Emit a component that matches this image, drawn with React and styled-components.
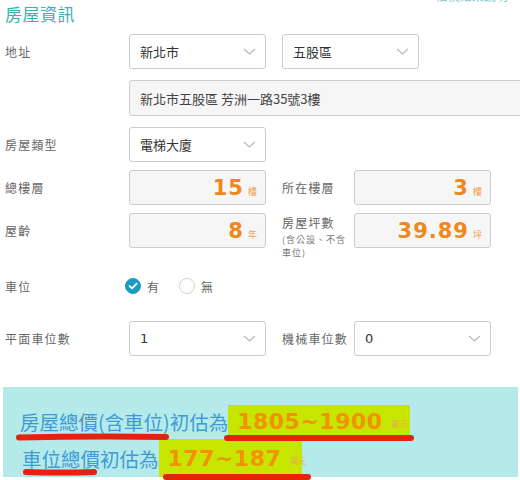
import React from "react";
import styled, { createGlobalStyle } from "styled-components";

const Global = createGlobalStyle`
  html, body { margin: 0; padding: 0; background: #fff; }
  body {
    width: 520px;
    height: 480px;
    overflow: hidden;
    font-family: "Noto Sans CJK TC", "Noto Sans", sans-serif;
  }
`;

const Page = styled.div`
  padding-left: 5px;
  width: 515px;
`;

const Header = styled.div`
  height: 30px;
  display: flex;
  justify-content: space-between;
  align-items: flex-start;
  overflow: hidden;
`;

const Title = styled.h2`
  margin: 0;
  font-size: 17px;
  font-weight: 400;
  line-height: 28px;
  color: #3fb0b2;
  letter-spacing: 0.5px;
`;

const TopLink = styled.a`
  margin-top: -11px;
  margin-right: 6px;
  font-size: 12px;
  line-height: 14px;
  color: #3fb0b2;
  opacity: 0.7;
  text-decoration: none;
`;

const Row = styled.div`
  display: flex;
  align-items: center;
  height: ${(p) => p.$h || 35}px;
  margin-top: ${(p) => p.$mt || 0}px;
`;

const Label = styled.div`
  width: ${(p) => p.$w || 124}px;
  flex: none;
  font-size: 12px;
  color: #666;
  letter-spacing: 1.2px;
`;

const SideLabel = styled.div`
  width: 72px;
  margin-left: 16px;
  flex: none;
  align-self: ${(p) => (p.$top ? "flex-start" : "center")};
  padding-top: ${(p) => (p.$top ? 1 : 0)}px;
  font-size: 12px;
  line-height: 17px;
  color: #666;
  letter-spacing: 1.2px;
`;

const Note = styled.div`
  margin-top: 2px;
  font-size: 9px;
  line-height: 13px;
  letter-spacing: 1px;
  color: #777;
`;

const SelectBox = styled.div`
  width: 137px;
  height: 35px;
  box-sizing: border-box;
  flex: none;
  margin-left: ${(p) => p.$ml || 0}px;
  border: 1px solid #ccc;
  border-radius: 3px;
  background: #fff;
  display: flex;
  align-items: center;
  justify-content: space-between;
  padding: 0 9px 0 10px;
  font-size: 13px;
  color: #333;
  font-family: ${(p) =>
    p.$num ? '"DejaVu Sans", sans-serif' : '"Noto Sans CJK TC", sans-serif'};
`;

const AddressBox = styled.div`
  width: 400px;
  height: 36px;
  box-sizing: border-box;
  flex: none;
  border: 1px solid #ccc;
  border-radius: 3px;
  background: #f6f6f6;
  display: flex;
  align-items: center;
  padding-left: 10px;
  font-size: 13px;
  color: #444;
`;

const NumberBox = styled.div`
  width: 137px;
  height: 35px;
  box-sizing: border-box;
  flex: none;
  border: 1px solid #ccc;
  border-radius: 3px;
  background: #f6f6f6;
  text-align: right;
  padding: 1px 8px 0 0;
  line-height: 32px;
  white-space: nowrap;
`;

const Num = styled.span`
  font-family: "DejaVu Sans", "Verdana", sans-serif;
  font-weight: 700;
  font-size: 21px;
  letter-spacing: 1px;
  color: #f0871b;
`;

const Unit = styled.span`
  font-size: 9px;
  color: #f0a050;
  margin-left: 4px;
`;

const RadioGroup = styled.div`
  display: flex;
  align-items: center;
  margin-left: -4px;
`;

const RadioItem = styled.label`
  display: flex;
  align-items: center;
  gap: 6px;
  margin-right: 20px;
  font-size: 12px;
  color: #666;
`;

const RadioDot = styled.span`
  width: 16px;
  height: 16px;
  box-sizing: border-box;
  border-radius: 50%;
  display: flex;
  align-items: center;
  justify-content: center;
  background: ${(p) => (p.$on ? "#1b9bc3" : "#fff")};
  border: 1px solid ${(p) => (p.$on ? "#1b9bc3" : "#d0d0d0")};
`;

const Panel = styled.div`
  position: relative;
  margin: 31px 0 0 -2px;
  width: 515px;
  height: 90px;
  box-sizing: border-box;
  padding: 18px 0 0 17px;
  background: #b5eaea;
`;

const Line = styled.div`
  display: flex;
  align-items: center;
  height: ${(p) => p.$h}px;
  margin-top: ${(p) => p.$mt || 0}px;
  padding-left: ${(p) => p.$pl || 0}px;
`;

const PanelText = styled.span`
  font-size: 19.5px;
  color: #3f9bd6;
  white-space: nowrap;
`;

const Highlight = styled.span`
  display: flex;
  align-items: center;
  height: 100%;
  width: ${(p) => p.$w}px;
  box-sizing: border-box;
  padding-left: 9px;
  background: #c6e600;
  white-space: nowrap;
`;

const BigNum = styled.span`
  font-family: "DejaVu Sans", "Verdana", sans-serif;
  font-weight: 700;
  font-size: 22px;
  letter-spacing: 0.5px;
  color: #f39200;
`;

const TinyUnit = styled.span`
  font-size: 8px;
  color: #e9ad55;
  margin-left: 9px;
  margin-top: 5px;
`;

const Marks = styled.svg`
  position: absolute;
  left: 0;
  top: 0;
  overflow: visible;
  pointer-events: none;
`;

const Chevron = () => (
  <svg width="13" height="7" viewBox="0 0 13 7">
    <path d="M1 1 L6.5 6 L12 1" fill="none" stroke="#b8b8b8" strokeWidth="1.2" />
  </svg>
);

const Check = () => (
  <svg width="10" height="8" viewBox="0 0 10 8">
    <path d="M1.5 4 L4 6.3 L8.6 1.6" fill="none" stroke="#fff" strokeWidth="1.8" strokeLinecap="round" strokeLinejoin="round" />
  </svg>
);

const Select = ({ children, ml, num }) => (
  <SelectBox $ml={ml} $num={num}>
    <span>{children}</span>
    <Chevron />
  </SelectBox>
);

export default function App() {
  return (
    <>
      <Global />
      <Page>
        <Header>
          <Title>房屋資訊</Title>
          <TopLink>估價結果說明 ›</TopLink>
        </Header>

        <Row $mt={4}>
          <Label>地址</Label>
          <Select>新北市</Select>
          <Select ml={16}>五股區</Select>
        </Row>

        <Row $mt={11} $h={36}>
          <Label />
          <AddressBox>新北市五股區 芳洲一路35號3樓</AddressBox>
        </Row>

        <Row $mt={11}>
          <Label>房屋類型</Label>
          <Select>電梯大廈</Select>
        </Row>

        <Row $mt={8}>
          <Label>總樓層</Label>
          <NumberBox>
            <Num>15</Num>
            <Unit>樓</Unit>
          </NumberBox>
          <SideLabel>所在樓層</SideLabel>
          <NumberBox>
            <Num>3</Num>
            <Unit>樓</Unit>
          </NumberBox>
        </Row>

        <Row $mt={8}>
          <Label>屋齡</Label>
          <NumberBox>
            <Num>8</Num>
            <Unit>年</Unit>
          </NumberBox>
          <SideLabel $top>
            房屋坪數
            <Note>
              (含公設、不含
              <br />
              車位)
            </Note>
          </SideLabel>
          <NumberBox>
            <Num>39.89</Num>
            <Unit>坪</Unit>
          </NumberBox>
        </Row>

        <Row $mt={28} $h={20}>
          <Label>車位</Label>
          <RadioGroup>
            <RadioItem>
              <RadioDot $on>
                <Check />
              </RadioDot>
              有
            </RadioItem>
            <RadioItem>
              <RadioDot />
              無
            </RadioItem>
          </RadioGroup>
        </Row>

        <Row $mt={25}>
          <Label>平面車位數</Label>
          <Select num>1</Select>
          <SideLabel>機械車位數</SideLabel>
          <Select num>0</Select>
        </Row>

        <Panel>
          <Line $h={32}>
            <PanelText>房屋總價(含車位)初估為</PanelText>
            <Highlight $w={182}>
              <BigNum>1805~1900</BigNum>
              <TinyUnit>萬元</TinyUnit>
            </Highlight>
          </Line>
          <Line $h={38} $mt={2} $pl={2}>
            <PanelText>車位總價初估為</PanelText>
            <Highlight $w={143}>
              <BigNum>177~187</BigNum>
              <TinyUnit>萬元</TinyUnit>
            </Highlight>
          </Line>
          <Marks width="515" height="90">
            <g stroke="#e3230f" strokeWidth="6" strokeLinecap="round" fill="none">
              <path d="M16 50.5 Q90 49 163 50" />
              <path d="M224 51 L408 51" />
              <path d="M23 85 Q57 86 91 85" />
              <path d="M163 90 L305 90" />
            </g>
          </Marks>
        </Panel>
      </Page>
    </>
  );
}
